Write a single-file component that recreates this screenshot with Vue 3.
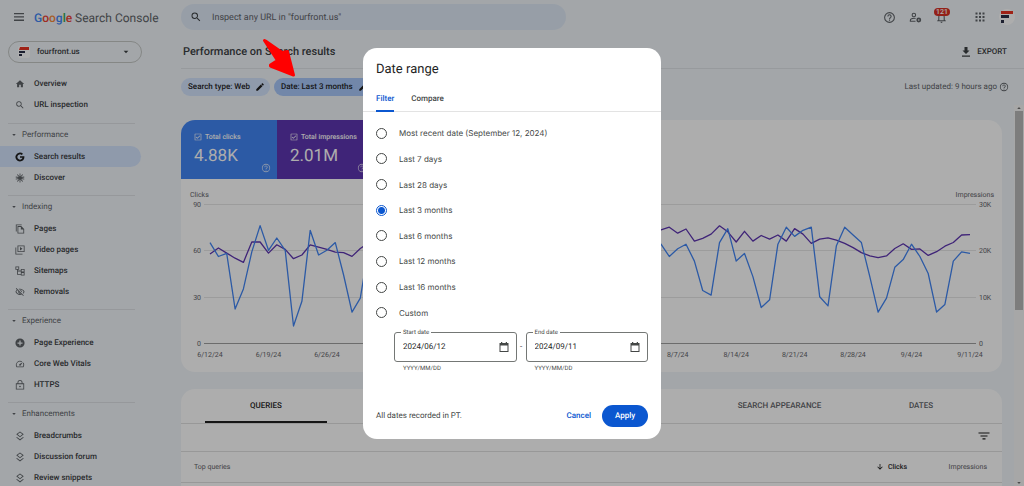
<script setup>
import { ref } from 'vue'

const icons = {
  home: 'M10 20v-6h4v6h5v-8h3L12 3 2 12h3v8z',
  search: 'M15.5 14h-.79l-.28-.27A6.47 6.47 0 0 0 16 9.5 6.5 6.5 0 1 0 9.5 16c1.61 0 3.09-.59 4.23-1.57l.27.28v.79l5 4.99L20.49 19l-4.99-5zm-6 0C7.01 14 5 11.99 5 9.5S7.01 5 9.5 5 14 7.01 14 9.5 11.99 14 9.5 14z',
  google: 'M12 10v4h5.800c-.6 2.700-2.800 4.300-5.800 4.300a6.300 6.300 0 1 1 4.200-11l3-3A10.700 10.700 0 1 0 12 22.700c6.200 0 10.600-4.300 10.600-10.500 0-.8-.1-1.500-.2-2.200z',
  discover: 'M11 1h2v7.600l4.700-5.800 1.600 1.300-4.600 5.700 7.300-1.300.4 2-7.400 1.500 7.400 1.500-.4 2-7.300-1.300 4.600 5.700-1.600 1.300L13 15.400V23h-2v-7.600l-4.700 5.800-1.600-1.300 4.600-5.700L2 15.500l-.4-2L9 12l-7.400-1.500.4-2 7.300 1.300-4.600-5.700 1.600-1.300L11 8.600z',
  pages: 'M16 1H2v17h2V3h12V1zm-1 4H6v18h16V12l-7-7zM8 21V7h6v6h6v8H8z',
  video: 'M4 6H1v17h17v-2H3V6zm19-5H6v16h17V1zm-2 14H8V3h13v12zM12 5v8l6-4z',
  sitemap: 'M1 1v8h4v12h9v2h9v-8h-9v4H7v-6h7v2h9V7h-9v4H7V9h3V1H1zm2 2h5v4H3V3zm13 6h5v4h-5V9zm0 8h5v4h-5v-4z',
  removals: 'M12 6a9.800 9.800 0 0 1 8.800 5.500 9.700 9.700 0 0 1-2.400 3.100l1.400 1.400A11.800 11.800 0 0 0 23 11.500C21.300 7.100 17 4 12 4c-1.300 0-2.500.2-3.600.6L10 6.200c.7-.1 1.300-.2 2-.2zm-1.100 1.100 2.100 2.100c.6.200 1 .7 1.300 1.300l2.100 2.100A4.500 4.500 0 0 0 10.900 7.100zM2 3.900l2.700 2.700A11.700 11.700 0 0 0 1 11.500C2.700 15.900 7 19 12 19c1.500 0 3-.3 4.300-.8l3.400 3.400 1.400-1.400L3.400 2.500 2 3.900zm7.500 7.500 2.600 2.600H12a2.500 2.500 0 0 1-2.500-2.600zM6.100 8l1.800 1.700a4.500 4.500 0 0 0 5.900 5.900l1 1c-.9.300-1.800.4-2.800.4a9.800 9.800 0 0 1-8.800-5.500A9.900 9.900 0 0 1 6.100 8z',
  plus: 'M12 1a11 11 0 1 0 0 22 11 11 0 0 0 0-22zm6 12.500h-4.500V18h-3v-4.500H6v-3h4.500V6h3v4.500H18v3z',
  speed: 'M20.400 8.600l-1.200 1.900A8 8 0 0 1 18.900 18H5.100A8 8 0 0 1 15.600 6.900l1.800-1.200A10 10 0 0 0 3.400 19c.3.600 1 1 1.700 1h13.800c.7 0 1.400-.4 1.700-1a10 10 0 0 0-.2-10.400zM10.600 15.400a2 2 0 0 0 2.800 0l5.700-8.500-8.500 5.700a2 2 0 0 0 0 2.800z',
  lock: 'M18 8V6A6 6 0 0 0 6 6v2H2v15h20V8h-4zM8 6a4 4 0 0 1 8 0v2H8V6zm12 15H4V10h16v11zm-8-3.500a2 2 0 1 0 0-4 2 2 0 0 0 0 4z',
  layers: 'M12 1 3 8l9 7 9-7-9-7zm0 2.500L17.700 8 12 12.500 6.300 8 12 3.500zM12 20l-7.400-5.700L3 15.500l9 7 9-7-1.600-1.200L12 20z',
  edit: 'M3 17.250V21h3.750L17.800 9.950l-3.750-3.750L3 17.250zM20.700 7.050a1 1 0 0 0 0-1.420l-2.340-2.340a1 1 0 0 0-1.410 0l-1.830 1.830 3.750 3.750 1.830-1.820z',
  help: 'M11 18h2v-2h-2v2zm1-16a10 10 0 1 0 0 20 10 10 0 0 0 0-20zm0 18a8 8 0 1 1 0-16 8 8 0 0 1 0 16zm0-14a4 4 0 0 0-4 4h2a2 2 0 1 1 4 0c0 2-3 1.750-3 5h2c0-2.250 3-2.500 3-5a4 4 0 0 0-4-4z',
  bell: 'M12 22a2 2 0 0 0 2-2h-4a2 2 0 0 0 2 2zm6-6v-5c0-3.100-1.600-5.600-4.500-6.300V4a1.500 1.500 0 0 0-3 0v.7C7.600 5.400 6 7.900 6 11v5l-2 2v1h16v-1l-2-2zm-2 1H8v-6c0-2.500 1.500-4.500 4-4.500s4 2 4 4.500v6z',
  apps: 'M3 3h4v4H3zm7 0h4v4h-4zm7 0h4v4h-4zM3 10h4v4H3zm7 0h4v4h-4zm7 0h4v4h-4zM3 17h4v4H3zm7 0h4v4h-4zm7 0h4v4h-4z',
  download: 'M19 9h-4V2H9v7H5l7 7 7-7zM4 19v2.500h16V19H4z',
  calendar: 'M19 4h-1V2h-2.500v2h-7V2H6v2H3v18h18V4h-2zm0 16H5V9h14v11z',
  filter: 'M9 19h6v-2.500H9V19zM1 5v2h22V5H1zm4 8h14v-2H5v2z',
  down: 'M20 12l-1.600-1.600-5.200 5.200V3h-2.400v12.600l-5.200-5.200L4 12l8 8 8-8z',
  caret: 'M5 8l7 8 7-8z',
  check: 'M21 2H3a1 1 0 0 0-1 1v18a1 1 0 0 0 1 1h18a1 1 0 0 0 1-1V3a1 1 0 0 0-1-1zm-1 18H4V4h16v16zM10 17.500l8.500-8.500L17 7.300l-7 7-3-3L5.500 13z',
}

const topItems = [
  { label: 'Overview', icon: 'home' },
  { label: 'URL inspection', icon: 'search' },
]
const sections = [
  { title: 'Performance', items: [
    { label: 'Search results', icon: 'google', active: true },
    { label: 'Discover', icon: 'discover' },
  ] },
  { title: 'Indexing', items: [
    { label: 'Pages', icon: 'pages' },
    { label: 'Video pages', icon: 'video' },
    { label: 'Sitemaps', icon: 'sitemap' },
    { label: 'Removals', icon: 'removals' },
  ] },
  { title: 'Experience', items: [
    { label: 'Page Experience', icon: 'plus' },
    { label: 'Core Web Vitals', icon: 'speed' },
    { label: 'HTTPS', icon: 'lock' },
  ] },
  { title: 'Enhancements', items: [
    { label: 'Breadcrumbs', icon: 'layers' },
    { label: 'Discussion forum', icon: 'layers' },
    { label: 'Review snippets', icon: 'layers' },
  ] },
]

// Daily clicks, and daily impressions in hundreds
const clicks = [
  65, 56, 58, 22, 35, 59, 76, 60, 68, 60, 11, 27, 73, 57, 60, 65, 44, 20, 29, 62,
  66, 61, 58, 40, 22, 30, 64, 68, 63, 60, 41, 20, 28, 66, 70, 62, 59, 43, 23,
  31, 65, 71, 64, 60, 42, 24, 30, 67, 72, 66, 61, 45, 60, 70,
  64, 56, 61, 64, 53, 34, 31, 65, 74, 53, 58, 43, 23, 28, 64, 75, 69, 73, 75, 30,
  24, 63, 75, 70, 65, 43, 20, 29, 49, 54, 64, 56, 45, 20, 25, 53, 59, 58,
]
const impressions = [
  192, 205, 194, 183, 174, 218, 218, 194, 212, 202, 182, 190, 212, 207, 202, 196, 195, 187, 204, 216,
  214, 210, 205, 198, 190, 204, 216, 218, 212, 206, 199, 192, 207, 219, 221, 214, 209, 200, 196,
  210, 224, 226, 220, 215, 206, 203, 218, 230, 234, 228, 222, 226, 234, 240,
  244, 250, 237, 246, 220, 226, 235, 253, 240, 218, 241, 220, 232, 224, 233, 220, 247, 235, 215, 224,
  227, 222, 215, 206, 195, 188, 184, 188, 204, 214, 202, 203, 189, 197, 209, 217, 233, 234,
]
const left = 29
const dayStep = 760 / 91
const axisY = 164
const plotHeight = 139
const line = (data, max) =>
  data.map((v, i) => `${(left + i * dayStep).toFixed(1)},${(axisY - (v / max) * plotHeight).toFixed(1)}`).join(' ')

const grid = [
  { y: 25, l: '90', r: '30K' },
  { y: 71, l: '60', r: '20K' },
  { y: 118, l: '30', r: '10K' },
  { y: 164, l: '0', r: '0' },
]
const weeks = ['6/12/24', '6/19/24', '6/26/24', '7/3/24', '7/10/24', '7/17/24', '7/24/24', '7/31/24',
  '8/7/24', '8/14/24', '8/21/24', '8/28/24', '9/4/24', '9/11/24']

const tabs = ['QUERIES', 'PAGES', 'COUNTRIES', 'DEVICES', 'SEARCH APPEARANCE', 'DATES']

const ranges = ['Most recent date (September 12, 2024)', 'Last 7 days', 'Last 28 days', 'Last 3 months',
  'Last 6 months', 'Last 12 months', 'Last 16 months', 'Custom']
const picked = ref('Last 3 months')
const url = ref('')
const start = ref('2024/06/12')
const end = ref('2024/09/11')
</script>

<template>
  <div class="app">
    <header class="topbar">
      <div class="brand">
        <button class="icon-btn" aria-label="Main menu">
          <svg class="menu" viewBox="0 0 10 8"><path d="M0 0h10v1.300H0zM0 3.300h10v1.300H0zM0 6.600h10V8H0z" /></svg>
        </button>
        <a class="logo" href="#"><span class="google"><i class="b">G</i><i class="r">o</i><i class="y">o</i><i class="b">g</i><i class="g">l</i><i class="r">e</i></span> Search Console</a>
      </div>
      <label class="search">
        <svg class="ic12" viewBox="0 0 24 24"><path :d="icons.search" /></svg>
        <input v-model="url" type="text" placeholder="Inspect any URL in &quot;fourfront.us&quot;" aria-label="Inspect any URL" />
      </label>
      <div class="tools">
        <button class="icon-btn" aria-label="Help"><svg class="ic13" viewBox="0 0 24 24"><path :d="icons.help" /></svg></button>
        <button class="icon-btn" aria-label="User settings">
          <svg class="ic13" viewBox="0 0 24 24" fill="none" stroke="currentColor" stroke-width="2">
            <circle cx="9" cy="7.500" r="3.200" /><path d="M12 19H2.500v-1.500c0-2.500 3.500-4 7-4 1 0 1.800.1 2.600.3" />
            <circle cx="18" cy="16.500" r="3" stroke-width="3" />
          </svg>
        </button>
        <button class="icon-btn bell" aria-label="Notifications">
          <svg class="ic13" viewBox="0 0 24 24"><path :d="icons.bell" /></svg><span class="badge">121</span>
        </button>
        <button class="icon-btn apps" aria-label="Google apps"><svg class="ic12" viewBox="0 0 24 24"><path :d="icons.apps" /></svg></button>
        <button class="avatar" aria-label="Account">
          <svg viewBox="0 0 12 12"><path fill="#ea3323" d="M0 0h12v3H0z" /><path fill="#2b3048" d="M0 4h8v3H0zM0 9h3v3H0z" /></svg>
        </button>
      </div>
    </header>

    <div class="body">
      <aside class="sidebar">
        <button class="property">
          <span class="favicon"><svg viewBox="0 0 12 12"><path fill="#ea3323" d="M2 1h9v3H1z" /><path fill="#2b3048" d="M1 5h6v2H1zM1 8h3v2H1z" /></svg></span>
          <span>fourfront.us</span>
          <svg class="ic8 push" viewBox="0 0 24 24"><path :d="icons.caret" /></svg>
        </button>
        <nav>
          <ul class="top-items">
            <li v-for="it in topItems" :key="it.label">
              <a href="#" class="nav-item"><svg class="ic10" viewBox="0 0 24 24"><path :d="icons[it.icon]" /></svg>{{ it.label }}</a>
            </li>
          </ul>
          <section v-for="s in sections" :key="s.title">
            <h2><svg class="ic6" viewBox="0 0 24 24"><path :d="icons.caret" /></svg>{{ s.title }}</h2>
            <ul>
              <li v-for="it in s.items" :key="it.label">
                <a href="#" class="nav-item" :class="{ active: it.active }">
                  <svg class="ic10" viewBox="0 0 24 24"><path fill-rule="evenodd" :d="icons[it.icon]" /></svg>{{ it.label }}
                </a>
              </li>
            </ul>
          </section>
        </nav>
      </aside>

      <main>
        <div class="title-row">
          <h1>Performance on Search results</h1>
          <button class="export"><svg class="ic12" viewBox="0 0 24 24"><path :d="icons.download" /></svg>EXPORT</button>
        </div>
        <div class="filters">
          <button class="chip">Search type: Web<svg class="ic10" viewBox="0 0 24 24"><path :d="icons.edit" /></svg></button>
          <button class="chip on">Date: Last 3 months<svg class="ic10" viewBox="0 0 24 24"><path :d="icons.edit" /></svg></button>
          <span class="updated">Last updated: 9 hours ago<svg class="ic10" viewBox="0 0 24 24"><path :d="icons.help" /></svg></span>
        </div>

        <div class="scroller">
          <div class="content">
            <section class="card chart-card">
              <div class="tiles">
                <button class="tile blue">
                  <span class="tile-label"><svg class="ic8" viewBox="0 0 24 24"><path :d="icons.check" /></svg>Total clicks</span>
                  <span class="tile-value">4.88K</span>
                  <svg class="ic10 tile-help" viewBox="0 0 24 24"><path :d="icons.help" /></svg>
                </button>
                <button class="tile purple">
                  <span class="tile-label"><svg class="ic8" viewBox="0 0 24 24"><path :d="icons.check" /></svg>Total impressions</span>
                  <span class="tile-value">2.01M</span>
                  <svg class="ic10 tile-help" viewBox="0 0 24 24"><path :d="icons.help" /></svg>
                </button>
              </div>
              <svg class="chart" viewBox="0 0 821 193" role="img" aria-label="Clicks and impressions per day">
                <text x="9" y="18">Clicks</text>
                <text x="813" y="18" text-anchor="end">Impressions</text>
                <g v-for="(g, i) in grid" :key="g.y">
                  <line x1="23" x2="795" :y1="g.y + 0.5" :y2="g.y + 0.5" :class="i === 3 ? 'axis' : 'gridline'" />
                  <text x="20" :y="g.y + 3" text-anchor="end">{{ g.l }}</text>
                  <text x="798" :y="g.y + 3">{{ g.r }}</text>
                </g>
                <text v-for="(w, i) in weeks" :key="w" :x="left + i * 7 * dayStep" y="178" text-anchor="middle">{{ w }}</text>
                <polyline class="impr" :points="line(impressions, 300)" />
                <polyline class="clk" :points="line(clicks, 90)" />
              </svg>
            </section>

            <section class="card table-card">
              <div class="tabs" role="tablist">
                <button v-for="(t, i) in tabs" :key="t" role="tab" :aria-selected="i === 0" :class="{ selected: i === 0, wide: i === 4 }">{{ t }}</button>
              </div>
              <div class="filter-row">
                <button class="icon-btn" aria-label="Filter rows"><svg class="ic12" viewBox="0 0 24 24"><path :d="icons.filter" /></svg></button>
              </div>
              <table>
                <thead>
                  <tr>
                    <th>Top queries</th>
                    <th class="num sorted"><svg class="ic8" viewBox="0 0 24 24"><path :d="icons.down" /></svg>Clicks</th>
                    <th class="num">Impressions</th>
                  </tr>
                </thead>
              </table>
            </section>
          </div>
          <div class="scrollbar" aria-hidden="true">
            <svg viewBox="0 0 24 24"><path d="M5 16l7-8 7 8z" /></svg>
            <div class="track"><div class="thumb"></div></div>
            <svg viewBox="0 0 24 24"><path :d="icons.caret" /></svg>
          </div>
        </div>
      </main>
    </div>

    <div class="backdrop">
      <form class="dialog" role="dialog" aria-labelledby="dlg-title" @submit.prevent>
        <h2 id="dlg-title">Date range</h2>
        <div class="dlg-tabs" role="tablist">
          <button type="button" role="tab" aria-selected="true" class="selected">Filter</button>
          <button type="button" role="tab" aria-selected="false">Compare</button>
        </div>
        <div class="options">
          <label v-for="r in ranges" :key="r"><input v-model="picked" type="radio" name="range" :value="r" />{{ r }}</label>
        </div>
        <div class="dates">
          <div class="field">
            <label for="start">Start date</label>
            <div class="box"><input id="start" v-model="start" type="text" /><svg class="ic12" viewBox="0 0 24 24"><path :d="icons.calendar" /></svg></div>
            <small>YYYY/MM/DD</small>
          </div>
          <span class="dash">-</span>
          <div class="field">
            <label for="end">End date</label>
            <div class="box"><input id="end" v-model="end" type="text" /><svg class="ic12" viewBox="0 0 24 24"><path :d="icons.calendar" /></svg></div>
            <small>YYYY/MM/DD</small>
          </div>
        </div>
        <div class="actions">
          <span>All dates recorded in PT.</span>
          <button type="button" class="cancel">Cancel</button>
          <button type="submit" class="apply">Apply</button>
        </div>
      </form>
    </div>

    <svg class="pointer" viewBox="0 0 34 40" aria-hidden="true">
      <path d="M2.500 2.500 L3.500 3 L20 14.500 L25.500 13.500 L31.500 37 L8.500 28 L8.500 27 L15.500 22.500 Z" fill="#f00" stroke="#f00" stroke-width="3" stroke-linejoin="round" />
    </svg>
  </div>
</template>

<style>
body { overflow: hidden; }
</style>

<style scoped>
* { box-sizing: border-box; }
.app {
  position: relative;
  display: flex;
  flex-direction: column;
  height: 100vh;
  overflow: hidden;
  background: #f0f5f9;
  color: #3c4043;
  font: 8px/12px Roboto, "Liberation Sans", sans-serif;
  text-rendering: geometricPrecision;
}
button, input { font: inherit; color: inherit; border: 0; padding: 0; margin: 0; background: none; outline: 0; text-rendering: inherit; }
a { color: inherit; text-decoration: none; }
h1, h2, ul { margin: 0; padding: 0; list-style: none; }
svg { display: block; flex: none; fill: currentColor; }
svg[fill="none"] { fill: none; }
.ic6 { width: 6px; height: 6px; }
.ic8 { width: 8px; height: 8px; }
.ic10 { width: 10px; height: 10px; }
.ic12 { width: 12px; height: 12px; }
.ic13 { width: 13px; height: 13px; }
.icon-btn { display: flex; color: #5f6368; }

.topbar { display: flex; align-items: center; height: 34px; flex: none; }
.brand { display: flex; align-items: center; gap: 10px; width: 181px; padding-left: 14px; }
.menu { width: 10px; height: 8px; }
.logo { padding-top: 2px; font-size: 12px; line-height: 16px; color: #5f6368; }
.google i { font-style: normal; font-weight: 500; }
.b { color: #4285f4; }
.r { color: #ea4335; }
.y { color: #f58a3c; }
.g { color: #34a853; }
.search { display: flex; align-items: center; gap: 10px; width: 385px; height: 26px; padding: 0 9px; border-radius: 13px; background: #dfe9f7; }
.search input { flex: 1; padding-top: 1px; font-size: 9px; }
.search input::placeholder { color: #5f6368; opacity: 1; }
.tools { display: flex; align-items: center; gap: 13px; margin-left: auto; padding-right: 9px; }
.bell { position: relative; }
.badge { position: absolute; left: -1px; top: -3px; width: 16px; text-align: center; border-radius: 4px; background: #d93025; color: #fff; font-size: 7px; line-height: 8px; font-weight: 500; }
.apps { margin-left: 13px; }
.avatar { display: flex; align-items: center; justify-content: center; width: 16px; height: 16px; border-radius: 8px; background: #fff; }
.avatar svg { width: 12px; height: 12px; }

.body { display: flex; flex: 1; min-height: 0; }
.sidebar { width: 181px; flex: none; padding-top: 7px; font-weight: 500; }
.property { display: flex; align-items: center; gap: 7px; width: 134px; height: 22px; margin: 0 0 10px 8px; padding: 0 11px 0 9px; border: 1px solid #c4c7c5; border-radius: 11px; font-weight: 500; }
.favicon { background: #fff; border-radius: 2px; }
.favicon svg { width: 12px; height: 12px; }
.push { margin-left: auto; }
.top-items { padding-bottom: 1px; }
.nav-item { display: flex; align-items: center; gap: 9px; width: 141px; height: 21px; padding-left: 15px; }
.nav-item .ic10 { color: #5f6368; }
.nav-item.active { border-radius: 0 11px 11px 0; background: #d3e3fd; }
.nav-item.active .ic10 { color: #1f1f1f; }
nav section { padding-top: 7px; }
nav section::before { content: ""; display: block; height: 1px; width: 127px; margin-left: 8px; background: #dde1e5; }
nav section h2 { display: flex; align-items: center; gap: 5px; height: 22px; padding-left: 11px; font-size: 8px; font-weight: 400; color: #5f6368; }

main { display: flex; flex-direction: column; flex: 1; min-width: 0; }
.title-row { display: flex; align-items: center; justify-content: space-between; height: 35px; flex: none; padding: 2px 17px 0 2px; border-bottom: 1px solid #dfe3e7; }
h1 { font-size: 11px; line-height: 16px; font-weight: 500; }
.export { display: flex; align-items: center; gap: 5px; font-weight: 500; }
.filters { display: flex; align-items: center; gap: 4px; height: 36px; flex: none; padding-right: 15px; }
.chip { display: flex; align-items: center; gap: 5px; height: 18px; padding: 0 5px 0 7px; border-radius: 9px; background: #d3e3fd; font-weight: 500; color: #1f1f1f; }
.chip.on { background: #a8c7fa; }
.updated { display: flex; align-items: center; gap: 2px; margin-left: auto; color: #5f6368; }

.scroller { display: flex; flex: 1; min-height: 0; overflow: hidden; }
.content { flex: 1; min-width: 0; padding: 15px 12px 0 0; }
.scrollbar { display: flex; flex-direction: column; width: 10px; flex: none; background: #f6f6f6; color: #707070; }
.scrollbar svg { width: 8px; height: 6px; margin-left: 1px; }
.track { flex: 1; padding: 0 1px; }
.thumb { height: 54%; background: #b8b8b8; }
.card { background: #fff; border-radius: 14px; overflow: hidden; }
.chart-card { margin-bottom: 17px; }
.tiles { display: flex; }
.tile { position: relative; display: flex; flex-direction: column; width: 96px; height: 59px; padding: 11px 13px 0; color: #fff; text-align: left; }
.blue { background: #4285f4; }
.purple { background: #5e35b1; }
.tile-label { display: flex; align-items: center; gap: 3px; font-size: 7px; font-weight: 500; white-space: nowrap; }
.tile-value { padding-top: 1px; font-size: 17px; line-height: 25px; }
.tile-help { position: absolute; right: 6px; bottom: 6px; opacity: 0.7; }
.chart { width: 100%; height: auto; }
.chart text { font-size: 7px; fill: #5f6368; }
.gridline { stroke: #e6e6e6; }
.axis { stroke: #a0a0a0; }
.chart polyline { fill: none; stroke-width: 1.3; stroke-linejoin: round; }
.impr { stroke: #5e35b1; }
.clk { stroke: #4285f4; }

.table-card { height: 200px; }
.tabs { display: flex; gap: 2px; height: 35px; padding: 0 20px 0 24px; border-bottom: 1px solid #e0e0e0; }
.tabs button { flex: 122; min-width: 0; padding-top: 2px; border-bottom: 2px solid transparent; font-weight: 500; color: #5f6368; }
.tabs .wide { flex: 157; }
.tabs .selected { color: #1f1f1f; border-color: #1f1f1f; }
.filter-row { display: flex; align-items: center; justify-content: flex-end; height: 28px; padding: 0 12px 4px 0; border-bottom: 1px solid #e0e0e0; }
.filter-row .icon-btn { color: #1f1f1f; }
table { width: 100%; border-collapse: collapse; font-size: 7px; }
th { height: 30px; padding: 0 0 0 13px; border-bottom: 1px solid #e0e0e0; text-align: left; font-weight: 400; color: #5f6368; }
.num { width: 80px; padding: 0 15px 0 0; text-align: right; }
.sorted { font-weight: 500; color: #1f1f1f; }
.sorted svg { display: inline-block; margin-right: 4px; vertical-align: middle; }

.backdrop { position: fixed; inset: 0; display: flex; align-items: center; justify-content: center; background: rgba(0, 0, 0, 0.32); }
.dialog { width: 298px; border-radius: 14px; background: #fff; color: #444746; }
.dialog h2 { padding: 13px 13px 0; font-size: 13px; line-height: 18px; font-weight: 400; color: #1f1f1f; }
.dlg-tabs { display: flex; gap: 17px; height: 33px; padding: 8px 13px 0; border-bottom: 1px solid #e3e3e3; font-weight: 500; }
.dlg-tabs button { height: 25px; padding-top: 2px; border-bottom: 2px solid transparent; }
.dlg-tabs .selected { color: #0b57d0; border-color: #0b57d0; }
.options { display: grid; grid-auto-rows: 1fr; height: 205px; margin-top: 9px; padding-left: 13px; font-family: Inter, Roboto, sans-serif; }
.options label { display: flex; align-items: center; gap: 12px; }
.options input { appearance: none; width: 11px; height: 11px; border: 1px solid #444746; border-radius: 50%; }
.options input:checked { border-color: #0b57d0; background: radial-gradient(circle, #0b57d0 0 3px, #fff 4px); }
.dates { display: flex; padding: 6px 13px 0 31px; }
.field { position: relative; flex: 1; min-width: 0; }
.field label { position: absolute; left: 7px; top: -4px; padding: 0 2px; background: #fff; font-size: 6px; line-height: 10px; }
.box { display: flex; align-items: center; height: 30px; padding: 0 6px 0 8px; border: 1px solid #747775; border-radius: 3px; }
.box input { flex: 1; min-width: 0; color: #1f1f1f; }
.field small { display: block; padding: 2px 0 0 9px; font-size: 6px; line-height: 10px; }
.dash { width: 9px; line-height: 30px; text-align: center; }
.actions { display: flex; align-items: center; padding: 31px 13px 12px; }
.cancel { margin-left: auto; margin-right: 11px; color: #0b57d0; font-weight: 500; }
.apply { width: 46px; height: 22px; border-radius: 11px; background: #0b57d0; color: #fff; font-weight: 500; }

.pointer { position: absolute; left: 262px; top: 38px; width: 34px; height: 40px; }
</style>
